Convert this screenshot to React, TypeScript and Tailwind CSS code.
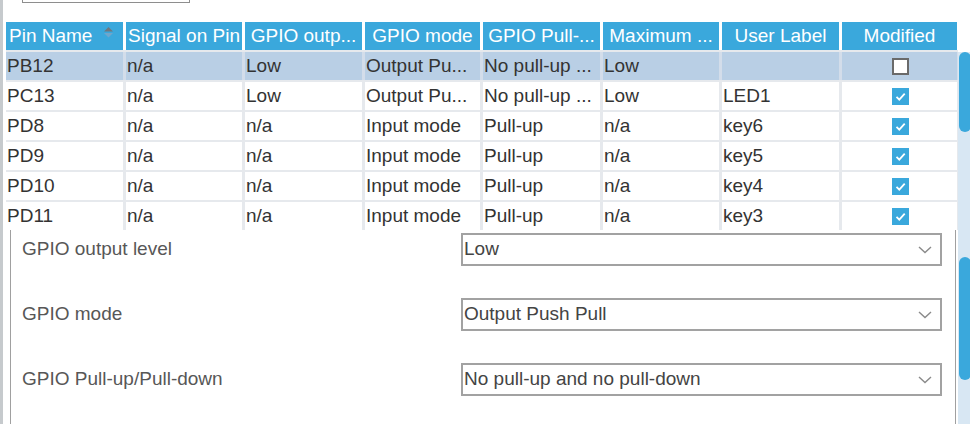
import React from 'react';

interface PinRow {
  pin: string;
  signal: string;
  output: string;
  mode: string;
  pull: string;
  speed: string;
  label: string;
  modified: boolean;
  selected?: boolean;
}

const rows: PinRow[] = [
  { pin: 'PB12', signal: 'n/a', output: 'Low', mode: 'Output Pu...', pull: 'No pull-up ...', speed: 'Low', label: '', modified: false, selected: true },
  { pin: 'PC13', signal: 'n/a', output: 'Low', mode: 'Output Pu...', pull: 'No pull-up ...', speed: 'Low', label: 'LED1', modified: true },
  { pin: 'PD8', signal: 'n/a', output: 'n/a', mode: 'Input mode', pull: 'Pull-up', speed: 'n/a', label: 'key6', modified: true },
  { pin: 'PD9', signal: 'n/a', output: 'n/a', mode: 'Input mode', pull: 'Pull-up', speed: 'n/a', label: 'key5', modified: true },
  { pin: 'PD10', signal: 'n/a', output: 'n/a', mode: 'Input mode', pull: 'Pull-up', speed: 'n/a', label: 'key4', modified: true },
  { pin: 'PD11', signal: 'n/a', output: 'n/a', mode: 'Input mode', pull: 'Pull-up', speed: 'n/a', label: 'key3', modified: true },
];

const headers = ['Signal on Pin', 'GPIO outp...', 'GPIO mode', 'GPIO Pull-...', 'Maximum ...', 'User Label', 'Modified'];

const fields = [
  { label: 'GPIO output level', value: 'Low' },
  { label: 'GPIO mode', value: 'Output Push Pull' },
  { label: 'GPIO Pull-up/Pull-down', value: 'No pull-up and no pull-down' },
];

const gridCols = 'grid grid-cols-[117px_116px_117px_115px_117px_116px_117px_115px] gap-x-[3px]';

const SortIcon = () => (
  <svg width="9" height="11" viewBox="0 0 9 11" className="ml-[12px] self-start mt-[5px] shrink-0">
    <polygon points="0,4.5 4.5,0 9,4.5" fill="#6f7880" />
    <polygon points="0,6 9,6 4.5,10.5" fill="#6ea6cc" />
  </svg>
);

const Checkbox = ({ checked }: { checked: boolean }) =>
  checked ? (
    <div className="w-[17px] h-[17px] bg-[#3aa8dc] flex items-center justify-center">
      <svg width="13" height="13" viewBox="0 0 13 13">
        <path d="M2.5 6.8l2.8 2.8 5.4-6" fill="none" stroke="#ffffff" strokeWidth="1.8" />
      </svg>
    </div>
  ) : (
    <div className="w-[17px] h-[17px] bg-white border-2 border-[#6a6a6a]" />
  );

const Chevron = () => (
  <svg width="14" height="8" viewBox="0 0 14 8" className="shrink-0">
    <path d="M1 1l6 5.5L13 1" fill="none" stroke="#8a8a8a" strokeWidth="1.4" />
  </svg>
);

export default function App() {
  return (
    <div className="w-[970px] h-[424px] overflow-hidden bg-white flex font-['Liberation_Sans',Arial,sans-serif] text-[19px]">
      {/* left edge */}
      <div className="w-[3px] shrink-0 bg-[#c6cacd]" />

      <div className="w-[955px] shrink-0 flex flex-col">
        {/* top field remnant */}
        <div className="h-[22px] pl-[19px]">
          <div className="w-[168px] h-[3px] border-x border-b border-[#8e8e8e]" />
        </div>

        {/* pin table */}
        <div className="pl-[3px]">
          <div className={`${gridCols} h-[28px] bg-white`}>
            <div className="bg-[#3aa8dc] text-white flex items-center pl-[3px] overflow-hidden whitespace-nowrap">
              <span>Pin Name</span>
              <SortIcon />
            </div>
            {headers.map((h) => (
              <div key={h} className="bg-[#3aa8dc] text-white flex items-center justify-center overflow-hidden whitespace-nowrap">
                {h}
              </div>
            ))}
          </div>

          <div className="flex flex-col gap-y-[2px] pt-[2px] bg-[#e6e9ed]">
            {rows.map((r) => {
              const cell = `${r.selected ? 'bg-[#b9cfe5]' : 'bg-white'} flex items-center pl-px overflow-hidden whitespace-nowrap text-[#333333]`;
              return (
                <div key={r.pin} className={`${gridCols} h-[28px] ${r.selected ? 'bg-[#d3ddea]' : 'bg-[#e6e9ed]'}`}>
                  <div className={cell}>{r.pin}</div>
                  <div className={cell}>{r.signal}</div>
                  <div className={cell}>{r.output}</div>
                  <div className={cell}>{r.mode}</div>
                  <div className={cell}>{r.pull}</div>
                  <div className={cell}>{r.speed}</div>
                  <div className={cell}>{r.label}</div>
                  <div className={`${cell} justify-center pl-0`}>
                    <Checkbox checked={r.modified} />
                  </div>
                </div>
              );
            })}
          </div>
        </div>

        {/* configuration panel */}
        <div className="ml-[7px] w-[946px] flex-1 border-x border-[#a0a0a0] pt-[3px] pl-[11px] flex flex-col gap-y-[32px]">
          {fields.map((f) => (
            <div key={f.label} className="flex items-center h-[33px]">
              <div className="w-[439px] text-[#575757] whitespace-nowrap">{f.label}</div>
              <div className="w-[481px] h-[33px] border-2 border-[#a2a2a2] flex items-center pl-[1px] pr-[8px] text-[#444444]">
                <span className="flex-1 whitespace-nowrap">{f.value}</span>
                <Chevron />
              </div>
            </div>
          ))}
        </div>
      </div>

      {/* right scroll bars */}
      <div className="w-[12px] shrink-0 flex flex-col overflow-hidden">
        <div className="h-[52px] bg-white shrink-0" />
        <div className="flex-1 bg-[#d8e7f3] flex flex-col">
          <div className="ml-px w-[12px] h-[80px] rounded-[6px] bg-[#3aa8dc] shrink-0" />
          <div className="ml-px mt-[125px] w-[12px] h-[123px] rounded-[6px] bg-[#3aa8dc] shrink-0" />
        </div>
      </div>
    </div>
  );
}
